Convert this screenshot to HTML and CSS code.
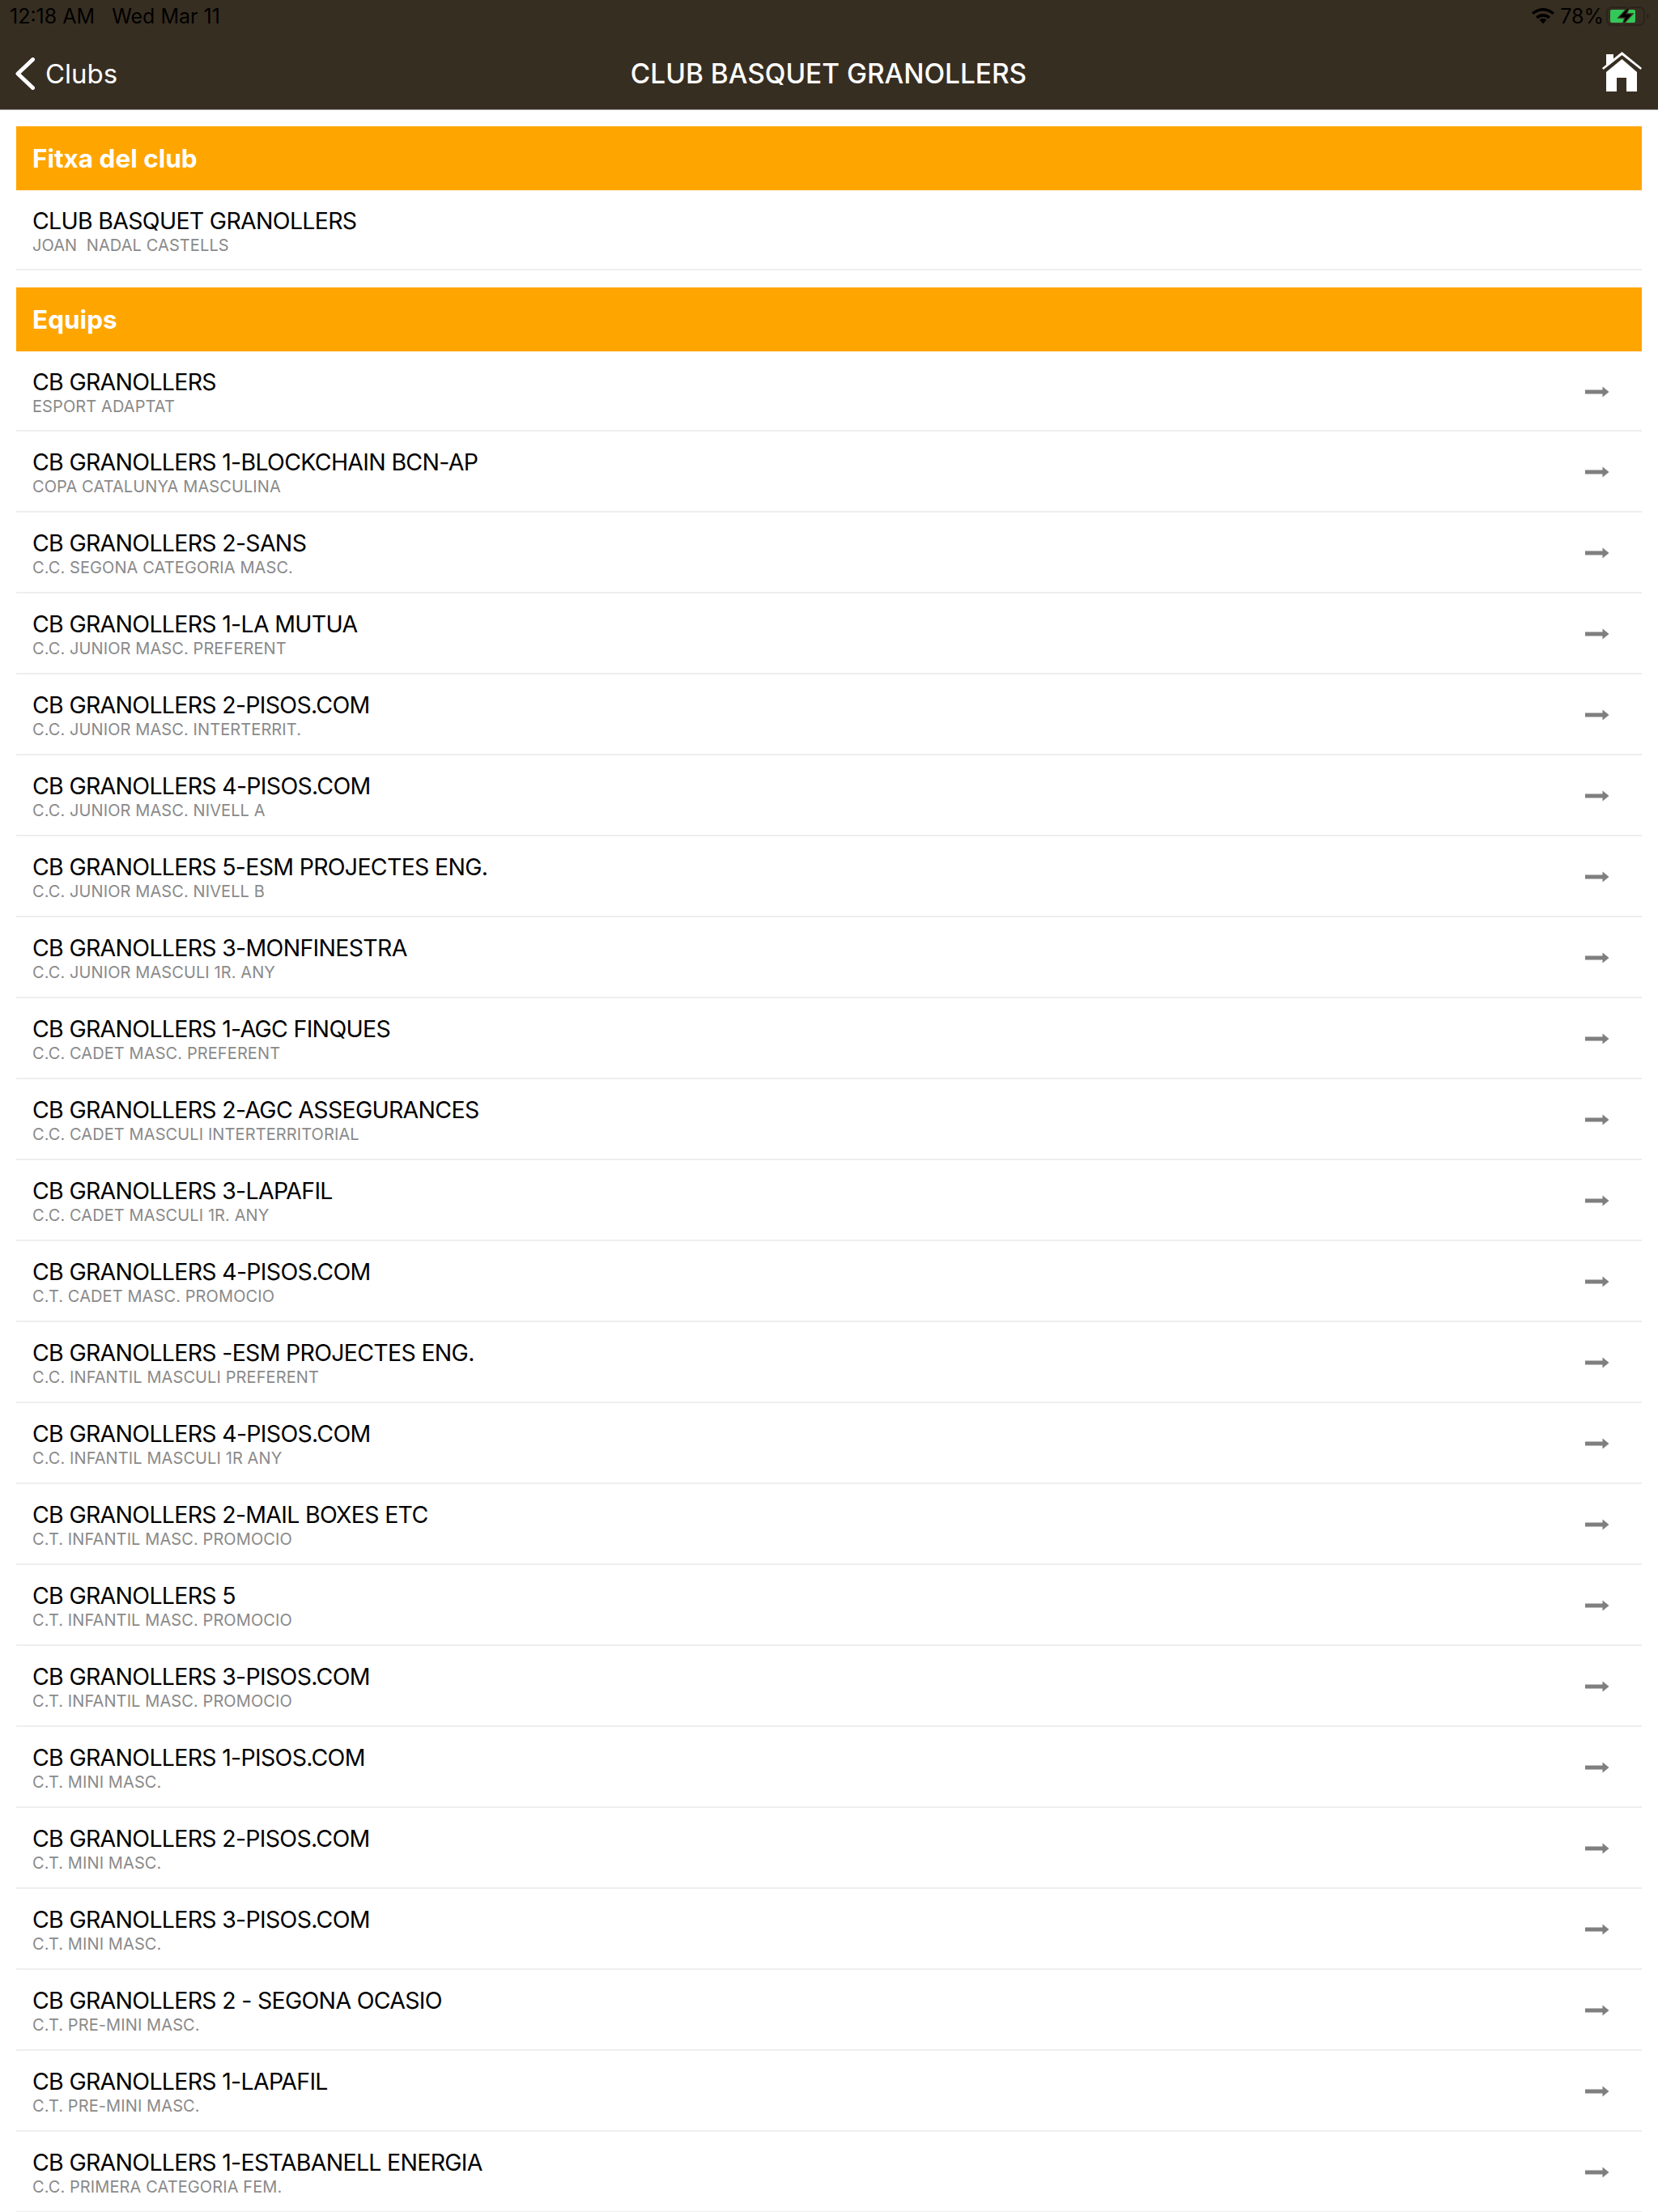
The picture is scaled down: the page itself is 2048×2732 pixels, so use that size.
FILE: index.html
```html
<!DOCTYPE html>
<html lang="ca">
<head>
<meta charset="utf-8">
<title>Club Basquet Granollers</title>
<link rel="stylesheet" href="styles.css">
</head>
<body>
<svg class="defs" width="0" height="0"><defs><symbol id="arrow" viewBox="0 0 30 16"><path d="M0 5.500h21.500V1.500L29.500 8l-8 6.500v-4H0Z"/></symbol></defs></svg>
<header class="topbar">
  <div class="status">
    <span class="status-time">12:18 AM</span><span class="status-date">Wed Mar 11</span>
    <span class="status-right">
      <svg class="wifi" width="28" height="20" viewBox="0 0 28 20"><path d="M14 19.500 9.600 14.600a6.400 6.400 0 0 1 8.800 0Z"/><path d="M5 10.500a13 13 0 0 1 18 0l-2.500 2.700a9.500 9.500 0 0 0-13 0Z"/><path d="M0 5.500a20.500 20.500 0 0 1 28 0l-2.400 2.600a17 17 0 0 0-23.200 0Z"/></svg>
      <span class="pct">78%</span>
      <svg class="battery" width="54" height="24" viewBox="0 0 54 24"><rect x="1" y="1" width="46" height="22" rx="6" fill="none" stroke="#2a241b" stroke-width="2"/><rect x="5" y="4" width="31" height="16" rx="2" fill="#34c759"/><path d="M50 8.500c2 .5 3 2 3 3.500s-1 3-3 3.500Z" fill="#2a241b"/><path d="M27 1 15 14h8l-3 9 13-14h-8l4-8Z" fill="#000" stroke="#372e22" stroke-width="1.500"/></svg>
    </span>
  </div>
  <nav class="nav">
    <a class="back"><svg width="24" height="40" viewBox="0 0 24 40"><path d="M21.500 2.500 3 20l18.500 17.500" fill="none" stroke="#fff" stroke-width="5" stroke-linecap="round" stroke-linejoin="round"/></svg><span>Clubs</span></a>
    <h1 class="nav-title">CLUB BASQUET GRANOLLERS</h1>
    <svg class="home" width="49" height="49" viewBox="0 0 49 49"><path fill="#fff" d="M24.500 0 49 20l-1.500 2L24.500 4 1.500 22 0 20l5-4V3h9v5.400Z"/><path fill="#fff" d="M24.500 9 43 25v24H30V32H18v17H5V25Z"/></svg>
  </nav>
</header>
<main class="content">
  <section class="section">
    <h2 class="section-head">Fitxa del club</h2>
    <div class="row"><div class="row-text"><div class="name">CLUB BASQUET GRANOLLERS</div><div class="sub">JOAN&nbsp; NADAL CASTELLS</div></div></div>
  </section>
  <section class="section">
    <h2 class="section-head">Equips</h2>
    <div class="row"><div class="row-text"><div class="name">CB GRANOLLERS</div><div class="sub">ESPORT ADAPTAT</div></div><svg class="arrow"><use href="#arrow"/></svg></div>
    <div class="row"><div class="row-text"><div class="name">CB GRANOLLERS 1-BLOCKCHAIN BCN-AP</div><div class="sub">COPA CATALUNYA MASCULINA</div></div><svg class="arrow"><use href="#arrow"/></svg></div>
    <div class="row"><div class="row-text"><div class="name">CB GRANOLLERS 2-SANS</div><div class="sub">C.C. SEGONA CATEGORIA MASC.</div></div><svg class="arrow"><use href="#arrow"/></svg></div>
    <div class="row"><div class="row-text"><div class="name">CB GRANOLLERS 1-LA MUTUA</div><div class="sub">C.C. JUNIOR MASC. PREFERENT</div></div><svg class="arrow"><use href="#arrow"/></svg></div>
    <div class="row"><div class="row-text"><div class="name">CB GRANOLLERS 2-PISOS.COM</div><div class="sub">C.C. JUNIOR MASC. INTERTERRIT.</div></div><svg class="arrow"><use href="#arrow"/></svg></div>
    <div class="row"><div class="row-text"><div class="name">CB GRANOLLERS 4-PISOS.COM</div><div class="sub">C.C. JUNIOR MASC. NIVELL A</div></div><svg class="arrow"><use href="#arrow"/></svg></div>
    <div class="row"><div class="row-text"><div class="name">CB GRANOLLERS 5-ESM PROJECTES ENG.</div><div class="sub">C.C. JUNIOR MASC. NIVELL B</div></div><svg class="arrow"><use href="#arrow"/></svg></div>
    <div class="row"><div class="row-text"><div class="name">CB GRANOLLERS 3-MONFINESTRA</div><div class="sub">C.C. JUNIOR MASCULI 1R. ANY</div></div><svg class="arrow"><use href="#arrow"/></svg></div>
    <div class="row"><div class="row-text"><div class="name">CB GRANOLLERS 1-AGC FINQUES</div><div class="sub">C.C. CADET MASC. PREFERENT</div></div><svg class="arrow"><use href="#arrow"/></svg></div>
    <div class="row"><div class="row-text"><div class="name">CB GRANOLLERS 2-AGC ASSEGURANCES</div><div class="sub">C.C. CADET MASCULI INTERTERRITORIAL</div></div><svg class="arrow"><use href="#arrow"/></svg></div>
    <div class="row"><div class="row-text"><div class="name">CB GRANOLLERS 3-LAPAFIL</div><div class="sub">C.C. CADET MASCULI 1R. ANY</div></div><svg class="arrow"><use href="#arrow"/></svg></div>
    <div class="row"><div class="row-text"><div class="name">CB GRANOLLERS 4-PISOS.COM</div><div class="sub">C.T. CADET MASC. PROMOCIO</div></div><svg class="arrow"><use href="#arrow"/></svg></div>
    <div class="row"><div class="row-text"><div class="name">CB GRANOLLERS -ESM PROJECTES ENG.</div><div class="sub">C.C. INFANTIL MASCULI PREFERENT</div></div><svg class="arrow"><use href="#arrow"/></svg></div>
    <div class="row"><div class="row-text"><div class="name">CB GRANOLLERS 4-PISOS.COM</div><div class="sub">C.C. INFANTIL MASCULI 1R ANY</div></div><svg class="arrow"><use href="#arrow"/></svg></div>
    <div class="row"><div class="row-text"><div class="name">CB GRANOLLERS 2-MAIL BOXES ETC</div><div class="sub">C.T. INFANTIL MASC. PROMOCIO</div></div><svg class="arrow"><use href="#arrow"/></svg></div>
    <div class="row"><div class="row-text"><div class="name">CB GRANOLLERS 5</div><div class="sub">C.T. INFANTIL MASC. PROMOCIO</div></div><svg class="arrow"><use href="#arrow"/></svg></div>
    <div class="row"><div class="row-text"><div class="name">CB GRANOLLERS 3-PISOS.COM</div><div class="sub">C.T. INFANTIL MASC. PROMOCIO</div></div><svg class="arrow"><use href="#arrow"/></svg></div>
    <div class="row"><div class="row-text"><div class="name">CB GRANOLLERS 1-PISOS.COM</div><div class="sub">C.T. MINI MASC.</div></div><svg class="arrow"><use href="#arrow"/></svg></div>
    <div class="row"><div class="row-text"><div class="name">CB GRANOLLERS 2-PISOS.COM</div><div class="sub">C.T. MINI MASC.</div></div><svg class="arrow"><use href="#arrow"/></svg></div>
    <div class="row"><div class="row-text"><div class="name">CB GRANOLLERS 3-PISOS.COM</div><div class="sub">C.T. MINI MASC.</div></div><svg class="arrow"><use href="#arrow"/></svg></div>
    <div class="row"><div class="row-text"><div class="name">CB GRANOLLERS 2 - SEGONA OCASIO</div><div class="sub">C.T. PRE-MINI MASC.</div></div><svg class="arrow"><use href="#arrow"/></svg></div>
    <div class="row"><div class="row-text"><div class="name">CB GRANOLLERS 1-LAPAFIL</div><div class="sub">C.T. PRE-MINI MASC.</div></div><svg class="arrow"><use href="#arrow"/></svg></div>
    <div class="row"><div class="row-text"><div class="name">CB GRANOLLERS 1-ESTABANELL ENERGIA</div><div class="sub">C.C. PRIMERA CATEGORIA FEM.</div></div><svg class="arrow"><use href="#arrow"/></svg></div>
  </section>
</main>
</body>
</html>
```
FILE: styles.css
```css
* { box-sizing: border-box; }
html, body { margin: 0; padding: 0; }
body {
  width: 2048px;
  height: 2732px;
  overflow: hidden;
  background: #fff;
  font-family: Inter, "Liberation Sans", sans-serif;
  color: #000;
}
.defs { position: absolute; }
.topbar {
  height: 136px;
  background: #372e22;
  border-bottom: 1px solid #9b9b9b;
}
.status {
  height: 40px;
  display: flex;
  align-items: center;
  padding: 0 10px 0 12px;
  font-size: 25px;
  color: #000;
}
.status-date { margin-left: 21px; }
.status-right { margin-left: auto; display: flex; align-items: center; gap: 7px; }
.pct { margin-right: -4px; }
.wifi { fill: #000; }
.nav {
  height: 94px;
  padding: 8px 20px 0 19px;
  display: grid;
  grid-template-columns: 1fr auto 1fr;
  align-items: center;
}
.back {
  display: flex;
  align-items: center;
  gap: 13px;
  color: #fff;
  font-size: 33px;
}
.nav-title {
  margin: 0;
  font-size: 33.4px;
  font-weight: 500;
  color: #fff;
}
.home { justify-self: end; margin-top: -5px; }
.content { padding: 20px 20px 0; }
.section { margin-bottom: 21px; }
.section-head {
  margin: 0;
  height: 79px;
  padding-left: 20px;
  display: flex;
  align-items: center;
  background: #ffa500;
  color: #fff;
  font-size: 31.5px;
  font-weight: 700;
}
.row {
  height: 100px;
  padding: 2px 40px 0 20px;
  display: flex;
  align-items: center;
  justify-content: space-between;
  border-bottom: 2px solid #eeeeee;
}
.section-head + .row { height: 99px; }
.name { font-size: 28.5px; line-height: 36px; letter-spacing: -0.7px; }
.sub { font-size: 20px; line-height: 24px; color: #8a8a8a; letter-spacing: 0.1px; }
.arrow { width: 30px; height: 16px; fill: #7f7f7f; flex: none; }
```
